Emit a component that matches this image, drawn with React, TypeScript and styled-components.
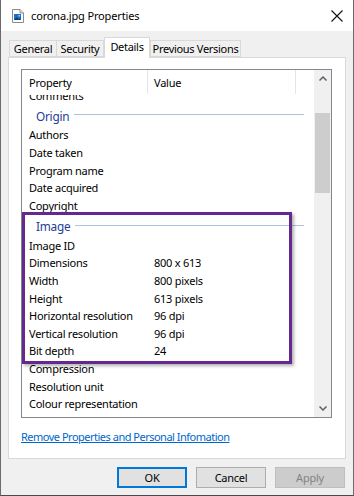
import React from "react";
import styled, { createGlobalStyle } from "styled-components";

const GlobalStyle = createGlobalStyle`
  html, body { margin: 0; padding: 0; background: #ffffff; }
  body { font-family: "Noto Sans", "Open Sans", sans-serif; font-size: 11px; color: #000; }
  * { box-sizing: border-box; }
`;

const FONT = `"Noto Sans", "Open Sans", sans-serif`;

const Window = styled.div`
  position: relative;
  width: 354px;
  height: 496px;
  background: #f0f0f0;
  border-left: 1px solid #6b6b6b;
  border-right: 1px solid #6b6b6b;
  border-bottom: 1px solid #4a4a4a;
  display: flex;
  flex-direction: column;
  font-family: ${FONT};
  font-size: 11px;
  letter-spacing: -0.25px;
`;

const TitleBar = styled.div`
  height: 31px;
  background: #ffffff;
  display: flex;
  align-items: center;
  padding-left: 11px;
  padding-right: 8px;
  flex-shrink: 0;
`;

const TitleText = styled.span`
  margin-left: 7px;
  font-size: 11px;
  color: #000;
  flex: 1;
  letter-spacing: -0.15px;
`;

const CloseButton = styled.div`
  width: 14px;
  height: 14px;
  display: flex;
  align-items: center;
  justify-content: center;
  margin-right: 1px;
`;

const Body = styled.div`
  flex: 1;
  display: flex;
  flex-direction: column;
  padding: 6px 7px 0 7px;
`;

const TabStrip = styled.div`
  display: flex;
  align-items: flex-end;
  height: 20px;
  padding-left: 1px;
  position: relative;
  z-index: 1;
`;

const Tab = styled.div<{ $active?: boolean; $w: number; $overlap?: boolean }>`
  width: ${(p) => p.$w}px;
  height: ${(p) => (p.$active ? "21px" : "17px")};
  margin-bottom: ${(p) => (p.$active ? "-1px" : "0")};
  margin-left: ${(p) => (p.$overlap ? "-1px" : "0")};
  padding-top: ${(p) => (p.$active ? "1px" : "0")};
  background: ${(p) => (p.$active ? "#ffffff" : "#f0f0f0")};
  border: 1px solid #d9d9d9;
  border-bottom: ${(p) => (p.$active ? "none" : "1px solid #d9d9d9")};
  display: flex;
  justify-content: center;
  align-items: ${(p) => (p.$active ? "flex-start" : "center")};
  white-space: nowrap;
  line-height: 16px;
  letter-spacing: -0.3px;
`;

const Panel = styled.div`
  background: #ffffff;
  border: 1px solid #d9d9d9;
  height: 402px;
  padding: 11px 13px 0 12px;
  display: flex;
  flex-direction: column;
`;

const ListView = styled.div`
  height: 349px;
  border: 1px solid #828790;
  display: flex;
  background: #ffffff;
`;

const ListMain = styled.div`
  flex: 1;
  display: flex;
  flex-direction: column;
  overflow: hidden;
`;

const Header = styled.div`
  height: 25px;
  display: flex;
  position: relative;
  z-index: 1;
  background: #ffffff;
  flex-shrink: 0;
`;

const HeaderCell = styled.div<{ $width: number }>`
  width: ${(p) => p.$width}px;
  border-right: 1px solid #e5e5e5;
  padding-left: ${(p) => (p.$width > 140 ? 6 : 7)}px;
  display: flex;
  align-items: center;
  height: 24px;
`;

const Viewport = styled.div`
  flex: 1;
  overflow: hidden;
`;

const Rows = styled.div`
  margin-top: -8.8px;
  display: flex;
  flex-direction: column;
`;

const Row = styled.div`
  height: 17.6px;
  display: flex;
  align-items: center;
  white-space: nowrap;
`;

const NameCell = styled.div`
  width: 126px;
  padding-left: 7px;
`;

const ValueCell = styled.div`
  padding-left: 6px;
`;

const GroupRow = styled.div`
  height: 22.4px;
  display: flex;
  align-items: center;
  padding-left: 14px;
  padding-right: 10px;
  gap: 5px;
`;

const GroupTitle = styled.span`
  color: #1e3c96;
  font-size: 11.8px;
  padding-top: 2px;
`;

const GroupLine = styled.div`
  flex: 1;
  height: 1px;
  background: #b3bfe3;
`;

const ScrollBar = styled.div`
  width: 17px;
  background: #f0f0f0;
  display: flex;
  flex-direction: column;
  align-items: center;
`;

const ScrollArrow = styled.div`
  width: 17px;
  height: 17px;
  display: flex;
  align-items: center;
  justify-content: center;
`;

const ScrollTrack = styled.div`
  flex: 1;
  width: 100%;
  padding: 26px 1px 0 1px;
`;

const ScrollThumb = styled.div`
  height: 80px;
  background: #cdcdcd;
`;

const LinkRow = styled.div`
  margin-top: 11px;
  height: 15px;
  display: flex;
  align-items: center;
`;

const LinkText = styled.a`
  color: #0066cc;
  text-decoration: underline;
  letter-spacing: -0.5px;
  cursor: pointer;
`;

const ButtonRow = styled.div`
  display: flex;
  justify-content: flex-end;
  gap: 9px;
  padding: 8px 1px 0 0;
`;

const Button = styled.div<{ $variant?: "default" | "disabled" }>`
  width: 70px;
  height: 21px;
  display: flex;
  align-items: center;
  justify-content: center;
  background: ${(p) => (p.$variant === "disabled" ? "#cccccc" : "#e1e1e1")};
  color: ${(p) => (p.$variant === "disabled" ? "#838383" : "#000")};
  border: ${(p) =>
    p.$variant === "default" ? "2px solid #0078d7" : p.$variant === "disabled" ? "1px solid #bfbfbf" : "1px solid #adadad"};
`;

const Highlight = styled.div`
  position: absolute;
  left: 21px;
  top: 212px;
  width: 270px;
  height: 152px;
  border: 3px solid #64288f;
  box-shadow: 2px 2px 3px rgba(0, 0, 0, 0.3);
  pointer-events: none;
`;

type Item = { kind: "row"; name: string; value?: string } | { kind: "group"; title: string };

const items: Item[] = [
  { kind: "row", name: "Comments" },
  { kind: "group", title: "Origin" },
  { kind: "row", name: "Authors" },
  { kind: "row", name: "Date taken" },
  { kind: "row", name: "Program name" },
  { kind: "row", name: "Date acquired" },
  { kind: "row", name: "Copyright" },
  { kind: "group", title: "Image" },
  { kind: "row", name: "Image ID" },
  { kind: "row", name: "Dimensions", value: "800 x 613" },
  { kind: "row", name: "Width", value: "800 pixels" },
  { kind: "row", name: "Height", value: "613 pixels" },
  { kind: "row", name: "Horizontal resolution", value: "96 dpi" },
  { kind: "row", name: "Vertical resolution", value: "96 dpi" },
  { kind: "row", name: "Bit depth", value: "24" },
  { kind: "row", name: "Compression" },
  { kind: "row", name: "Resolution unit" },
  { kind: "row", name: "Colour representation" },
];

const FileIcon = () => (
  <svg width="12" height="14" viewBox="0 0 12 14">
    <path d="M0.5 0.5 H8 L11.5 4 V13.5 H0.5 Z" fill="#ffffff" stroke="#8a8a8a" />
    <path d="M8 0.5 V4 H11.5" fill="#e8e8e8" stroke="#8a8a8a" />
    <rect x="2" y="5" width="7" height="6" fill="#1f6fc5" />
    <path d="M2 11 L4.5 8 L6.5 10 L7.5 9 L9 11 Z" fill="#0b3f80" />
    <rect x="6.5" y="6" width="1.5" height="1.5" fill="#9fd0ff" />
  </svg>
);

const CloseIcon = () => (
  <svg width="12" height="12" viewBox="0 0 12 12">
    <path d="M0.5 0.5 L11.5 11.5 M11.5 0.5 L0.5 11.5" stroke="#111" strokeWidth="1.1" />
  </svg>
);

const Chevron = ({ up }: { up?: boolean }) => (
  <svg width="8" height="5" viewBox="0 0 8 5">
    <path d={up ? "M0.5 4.5 L4 1 L7.5 4.5" : "M0.5 0.5 L4 4 L7.5 0.5"} fill="none" stroke="#606060" strokeWidth="1.5" />
  </svg>
);

export default function App() {
  return (
    <>
      <GlobalStyle />
      <Window>
        <TitleBar>
          <FileIcon />
          <TitleText>corona.jpg Properties</TitleText>
          <CloseButton>
            <CloseIcon />
          </CloseButton>
        </TitleBar>
        <Body>
          <TabStrip>
            <Tab $w={48}>General</Tab>
            <Tab $w={48} $overlap>Security</Tab>
            <Tab $w={46} $active>Details</Tab>
            <Tab $w={91}>Previous Versions</Tab>
          </TabStrip>
          <Panel>
            <ListView>
              <ListMain>
                <Header>
                  <HeaderCell $width={126}>Property</HeaderCell>
                  <HeaderCell $width={148}>Value</HeaderCell>
                </Header>
                <Viewport>
                  <Rows>
                    {items.map((it, i) =>
                      it.kind === "group" ? (
                        <GroupRow key={i}>
                          <GroupTitle>{it.title}</GroupTitle>
                          <GroupLine />
                        </GroupRow>
                      ) : (
                        <Row key={i}>
                          <NameCell>{it.name}</NameCell>
                          {it.value && <ValueCell>{it.value}</ValueCell>}
                        </Row>
                      )
                    )}
                  </Rows>
                </Viewport>
              </ListMain>
              <ScrollBar>
                <ScrollArrow>
                  <Chevron up />
                </ScrollArrow>
                <ScrollTrack>
                  <ScrollThumb />
                </ScrollTrack>
                <ScrollArrow>
                  <Chevron />
                </ScrollArrow>
              </ScrollBar>
            </ListView>
            <LinkRow>
              <LinkText>Remove Properties and Personal Infomation</LinkText>
            </LinkRow>
          </Panel>
          <ButtonRow>
            <Button $variant="default">OK</Button>
            <Button>Cancel</Button>
            <Button $variant="disabled">Apply</Button>
          </ButtonRow>
        </Body>
        <Highlight />
      </Window>
    </>
  );
}
